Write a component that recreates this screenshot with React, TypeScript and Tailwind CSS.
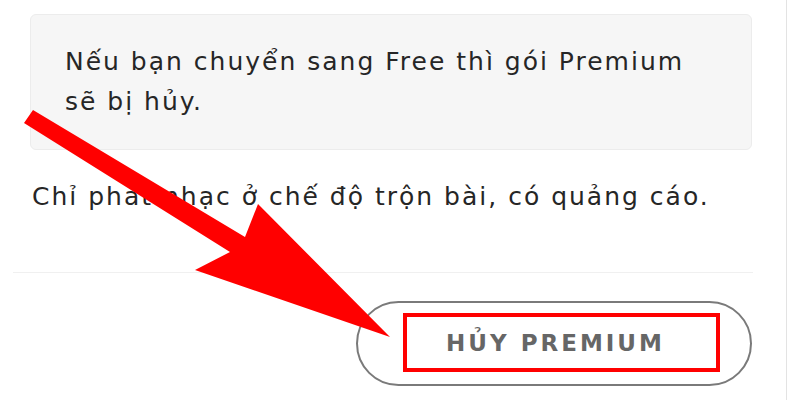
export default function App() {
  return (
    <div className="relative w-[800px] h-[400px] bg-white overflow-hidden font-['DejaVu_Sans','Noto_Sans',sans-serif]">
      <div className="w-[787px] h-full border-r border-[#e3e3e3]">
        <div className="pl-[30px] pr-[34px] pt-[14px]">
          <div className="rounded-md border border-[#ececec] bg-[#f6f6f6] px-[34px] py-[27px] text-[25px] leading-[40px] tracking-[2px] text-[#262626]">
            Nếu bạn chuyển sang Free thì gói Premium
            <br />
            sẽ bị hủy.
          </div>
          <p className="mt-[27px] pl-[2px] text-[25px] leading-[40px] tracking-[2px] text-[#262626]">
            Chỉ phát nhạc ở chế độ trộn bài, có quảng cáo.
          </p>
        </div>
        <div className="ml-[13px] mt-[55px] w-[740px] border-t border-[#f0f0f0]" />
        <div className="flex justify-end pr-[34px] pt-[28px]">
          <button className="flex h-[85px] w-[396px] items-center justify-center rounded-full border-2 border-[#7a7a7a] pl-[3px] text-[23px] font-bold tracking-[3px] text-[#666]">
            HỦY PREMIUM
          </button>
        </div>
      </div>

      {/* annotation */}
      <div className="absolute left-[403px] top-[313px] h-[59px] w-[317px] border-4 border-[#ff0000]" />
      <svg className="absolute left-0 top-0" width="800" height="400" viewBox="0 0 800 400">
        <polygon
          points="24,123 33,110 245,237 258,204 390,337 195,270 230,252"
          fill="#ff0000"
        />
      </svg>
    </div>
  );
}
